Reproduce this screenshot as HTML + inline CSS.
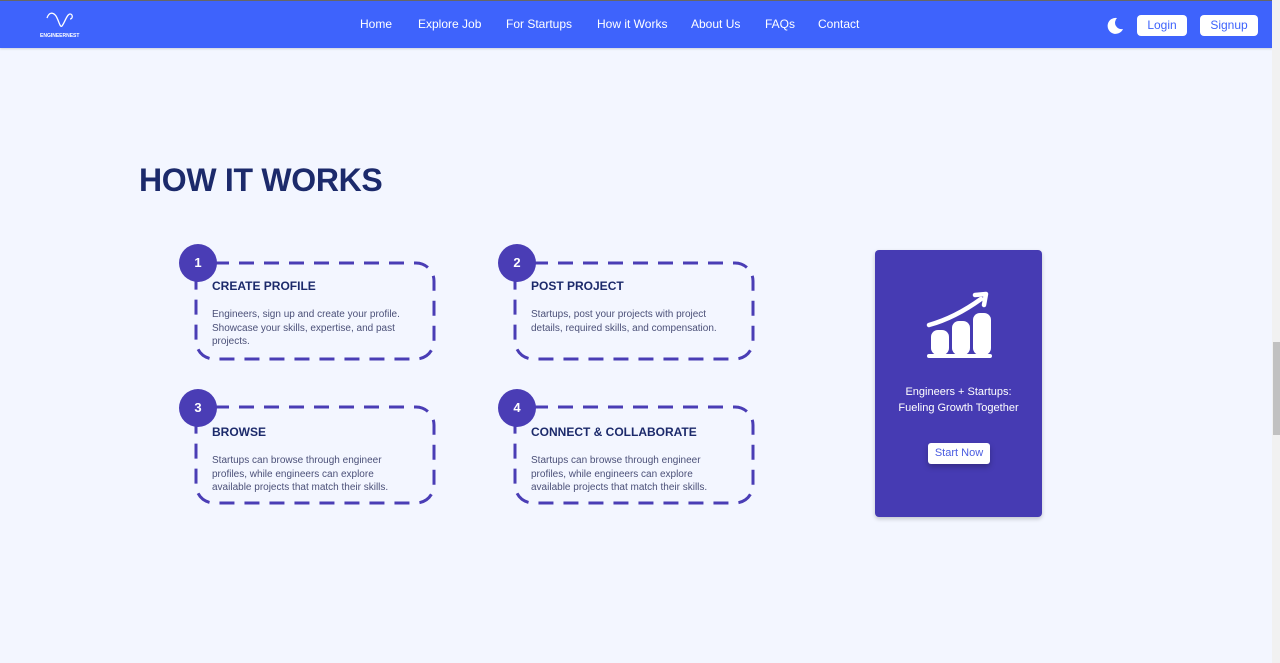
<!DOCTYPE html>
<html><head><meta charset="utf-8"><style>
*{margin:0;padding:0;box-sizing:border-box}
body{width:1280px;height:663px;overflow:hidden;background:#f3f6ff;font-family:"Liberation Sans",sans-serif;position:relative}
.nav{position:absolute;left:0;top:0;width:1272px;height:48px;background:#3e63fc;border-top:1px solid #666;box-shadow:0 1px 2px rgba(0,0,0,.15)}
.nav a{position:absolute;top:16px;color:#fff;font-size:12px;text-decoration:none}
.btn{position:absolute;top:14px;height:21px;background:#fff;border-radius:4px;color:#3e63fc;font-size:12px;text-align:center;line-height:21px}
.sb{position:absolute;left:1272px;top:0;width:8px;height:663px;background:#f1f1f1}
.thumb{position:absolute;left:1273px;top:342px;width:7px;height:93px;background:#c1c1c1}
h1{position:absolute;left:139px;top:162px;font-size:32px;font-weight:bold;color:#1c2a6b;letter-spacing:-0.3px}
.box{position:absolute}
.box svg{position:absolute;left:0;top:0}
.circ{position:absolute;width:38px;height:38px;border-radius:50%;background:#4a3db5;color:#fff;font-weight:bold;font-size:13px;text-align:center;line-height:38px}
.t{position:absolute;font-weight:bold;font-size:12px;color:#1c2a6b}
.d{position:absolute;font-size:10px;line-height:13.5px;color:#4b5078}
.card{position:absolute;left:875px;top:250px;width:167px;height:267px;background:#463bb3;border-radius:4px;box-shadow:0 2px 4px rgba(0,0,0,.2)}
</style></head><body>
<div class="nav">
<svg style="position:absolute;left:44px;top:9px" width="32" height="20" viewBox="0 0 32 20"><path d="M3 8 C5 2,9 2,12 6 C15 11,16 18,18 16 C21 12,23 4,26 4 C29 4,29 9,26 9" fill="none" stroke="#fff" stroke-width="1.3"/></svg>
<div style="position:absolute;left:40px;top:32px;color:#fff;font-size:5px;font-weight:bold">ENGINEERNEST</div>
<a style="left:360px">Home</a><a style="left:418px">Explore Job</a><a style="left:506px">For Startups</a><a style="left:597px">How it Works</a><a style="left:691px">About Us</a><a style="left:765px">FAQs</a><a style="left:818px">Contact</a>
<svg style="position:absolute;left:1107px;top:16px" width="17" height="17" viewBox="0 0 17 17"><path d="M10 1 A8 8 0 1 0 16 12 A6.5 6.5 0 0 1 10 1Z" fill="#fff"/></svg>
<div class="btn" style="left:1137px;width:50px">Login</div>
<div class="btn" style="left:1200px;width:58px">Signup</div>
</div>
<div class="sb"></div><div class="thumb"></div>
<h1>HOW IT WORKS</h1>

<div class="box" style="left:194px;top:261px"><svg width="242" height="100"><rect x="2" y="2" width="238" height="96" rx="18" fill="none" stroke="#4a3db5" stroke-width="3" stroke-dasharray="15 10"/></svg></div>
<div class="circ" style="left:179px;top:244px">1</div>
<div class="t" style="left:212px;top:279px">CREATE PROFILE</div>
<div class="d" style="left:212px;top:308px">Engineers, sign up and create your profile.<br>Showcase your skills, expertise, and past<br>projects.</div>

<div class="box" style="left:513px;top:261px"><svg width="242" height="100"><rect x="2" y="2" width="238" height="96" rx="18" fill="none" stroke="#4a3db5" stroke-width="3" stroke-dasharray="15 10"/></svg></div>
<div class="circ" style="left:498px;top:244px">2</div>
<div class="t" style="left:531px;top:279px">POST PROJECT</div>
<div class="d" style="left:531px;top:308px">Startups, post your projects with project<br>details, required skills, and compensation.</div>

<div class="box" style="left:194px;top:405px"><svg width="242" height="100"><rect x="2" y="2" width="238" height="96" rx="18" fill="none" stroke="#4a3db5" stroke-width="3" stroke-dasharray="15 10"/></svg></div>
<div class="circ" style="left:179px;top:389px">3</div>
<div class="t" style="left:212px;top:425px">BROWSE</div>
<div class="d" style="left:212px;top:454px">Startups can browse through engineer<br>profiles, while engineers can explore<br>available projects that match their skills.</div>

<div class="box" style="left:513px;top:405px"><svg width="242" height="100"><rect x="2" y="2" width="238" height="96" rx="18" fill="none" stroke="#4a3db5" stroke-width="3" stroke-dasharray="15 10"/></svg></div>
<div class="circ" style="left:498px;top:389px">4</div>
<div class="t" style="left:531px;top:425px">CONNECT &amp; COLLABORATE</div>
<div class="d" style="left:531px;top:454px">Startups can browse through engineer<br>profiles, while engineers can explore<br>available projects that match their skills.</div>

<div class="card">
<svg style="position:absolute;left:50px;top:40px" width="70" height="70" viewBox="0 0 70 70">
<path d="M4 35 C22 30,38 22,56 9" fill="none" stroke="#fff" stroke-width="4.5" stroke-linecap="round"/>
<path d="M50 5 L61 4 L59 15" fill="none" stroke="#fff" stroke-width="4.5" stroke-linecap="round" stroke-linejoin="round"/>
<rect x="6" y="40" width="18" height="25" rx="7" fill="#fff"/>
<rect x="27" y="31" width="18" height="34" rx="7" fill="#fff"/>
<rect x="48" y="23" width="18" height="42" rx="7" fill="#fff"/>
<rect x="2" y="64" width="65" height="4" rx="2" fill="#fff"/>
</svg>
<div style="position:absolute;left:0;top:134px;width:167px;text-align:center;color:#fff;font-size:11px;line-height:16px">Engineers + Startups:<br>Fueling Growth Together</div>
<div style="position:absolute;left:53px;top:193px;width:62px;height:21px;background:#fff;border-radius:3px;color:#4a5ce0;font-size:11px;text-align:center;line-height:21px;box-shadow:0 3px 6px rgba(0,0,0,.25)">Start Now</div>
</div>
</body></html>
